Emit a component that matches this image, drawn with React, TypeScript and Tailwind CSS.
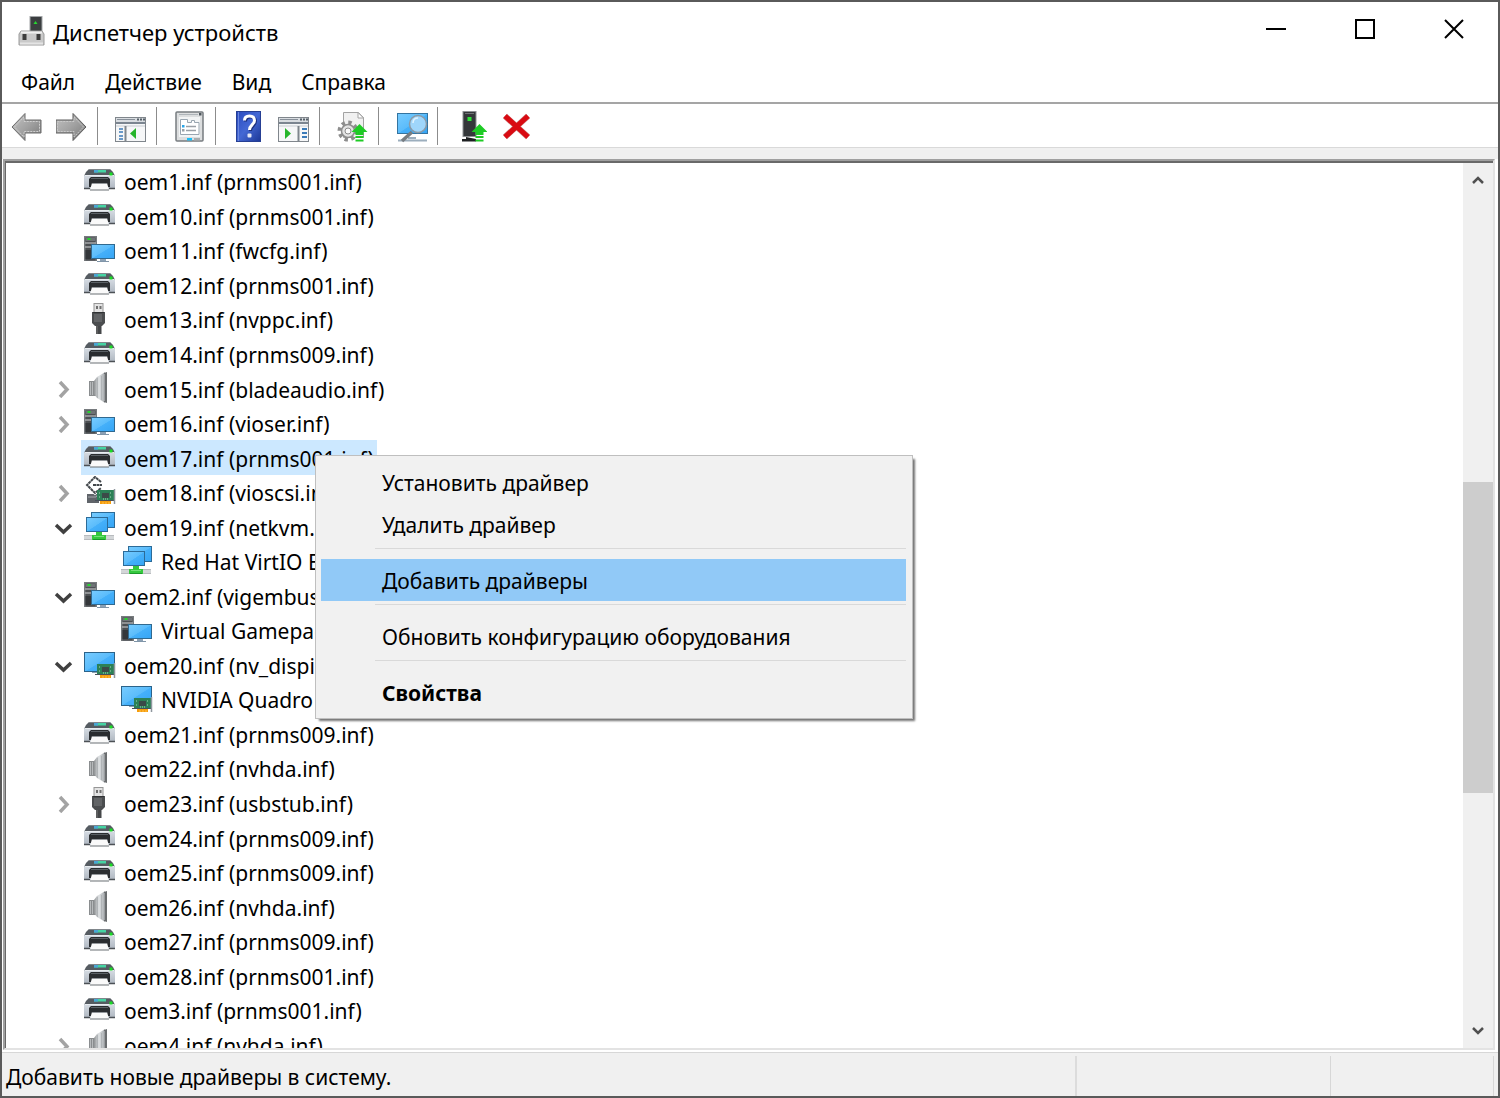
import type { ReactNode } from 'react'

type IconName = 'printer' | 'computer' | 'usb' | 'speaker' | 'storage' | 'network' | 'display'

interface TreeRow {
  label: string
  icon: IconName
  state?: 'open' | 'closed'
  child?: boolean
  selected?: boolean
}

const rows: TreeRow[] = [
  { label: 'oem1.inf (prnms001.inf)', icon: 'printer' },
  { label: 'oem10.inf (prnms001.inf)', icon: 'printer' },
  { label: 'oem11.inf (fwcfg.inf)', icon: 'computer' },
  { label: 'oem12.inf (prnms001.inf)', icon: 'printer' },
  { label: 'oem13.inf (nvppc.inf)', icon: 'usb' },
  { label: 'oem14.inf (prnms009.inf)', icon: 'printer' },
  { label: 'oem15.inf (bladeaudio.inf)', icon: 'speaker', state: 'closed' },
  { label: 'oem16.inf (vioser.inf)', icon: 'computer', state: 'closed' },
  { label: 'oem17.inf (prnms001.inf)', icon: 'printer', selected: true },
  { label: 'oem18.inf (vioscsi.inf)', icon: 'storage', state: 'closed' },
  { label: 'oem19.inf (netkvm.inf)', icon: 'network', state: 'open' },
  { label: 'Red Hat VirtIO E', icon: 'network', child: true },
  { label: 'oem2.inf (vigembus', icon: 'computer', state: 'open' },
  { label: 'Virtual Gamepad', icon: 'computer', child: true },
  { label: 'oem20.inf (nv_dispi', icon: 'display', state: 'open' },
  { label: 'NVIDIA Quadro', icon: 'display', child: true },
  { label: 'oem21.inf (prnms009.inf)', icon: 'printer' },
  { label: 'oem22.inf (nvhda.inf)', icon: 'speaker' },
  { label: 'oem23.inf (usbstub.inf)', icon: 'usb', state: 'closed' },
  { label: 'oem24.inf (prnms009.inf)', icon: 'printer' },
  { label: 'oem25.inf (prnms009.inf)', icon: 'printer' },
  { label: 'oem26.inf (nvhda.inf)', icon: 'speaker' },
  { label: 'oem27.inf (prnms009.inf)', icon: 'printer' },
  { label: 'oem28.inf (prnms001.inf)', icon: 'printer' },
  { label: 'oem3.inf (prnms001.inf)', icon: 'printer' },
  { label: 'oem4.inf (nvhda.inf)', icon: 'speaker', state: 'closed' },
]

const menuBar = ['Файл', 'Действие', 'Вид', 'Справка']

function Svg({ children }: { children: ReactNode }) {
  return (
    <svg viewBox="0 0 32 32" className="h-8 w-8 shrink-0" aria-hidden="true">
      {children}
    </svg>
  )
}

// Gradients shared by all the icons
function IconDefs() {
  return (
    <svg className="absolute h-0 w-0" aria-hidden="true">
      <defs>
        <linearGradient id="screen" x1="0" y1="0" x2="1" y2="1">
          <stop offset="0" stopColor="#78ccff" />
          <stop offset="0.5" stopColor="#5bbcfb" />
          <stop offset="0.52" stopColor="#45b0fa" />
          <stop offset="1" stopColor="#36a5f5" />
        </linearGradient>
        <linearGradient id="arrow" x1="0" y1="0" x2="1" y2="1">
          <stop offset="0" stopColor="#c4c4c4" />
          <stop offset="0.5" stopColor="#a2a2a2" />
          <stop offset="1" stopColor="#777777" />
        </linearGradient>
        <linearGradient id="help" x1="0" y1="0" x2="1" y2="1">
          <stop offset="0" stopColor="#2a4bc0" />
          <stop offset="0.5" stopColor="#4468d4" />
          <stop offset="1" stopColor="#1c3796" />
        </linearGradient>
        <linearGradient id="cone" x1="0" y1="0" x2="1" y2="0">
          <stop offset="0" stopColor="#8f9294" />
          <stop offset="0.45" stopColor="#dfe2e4" />
          <stop offset="1" stopColor="#a4a8ab" />
        </linearGradient>
        <linearGradient id="body" x1="0" y1="0" x2="0" y2="1">
          <stop offset="0" stopColor="#d6dce3" />
          <stop offset="1" stopColor="#aeb6c0" />
        </linearGradient>
      </defs>
    </svg>
  )
}

function Board({ x, y }: { x: number; y: number }) {
  return (
    <g transform={`translate(${x} ${y})`}>
      <rect x="5" y="11" width="11" height="4" fill="#f59d0d" />
      <path d="M8 13v2M11 13v2M14 13v2" stroke="#ffc04d" />
      <rect x="2" y="1" width="17" height="11" fill="#2c8157" />
      <path d="M0 11.5h19" stroke="#47505a" />
      <rect x="7" y="4" width="7" height="5" fill="#3b4a48" />
      <path d="M4 4h2M4 8h2M15 4h2M15 8h2M8 10h5" stroke="#a8d8b8" strokeDasharray="1 1" />
      <path d="M19.500 0v15" stroke="#8f979e" strokeWidth="1.500" />
    </g>
  )
}

function DeviceIcon({ name }: { name: IconName }) {
  switch (name) {
    case 'printer':
      return (
        <Svg>
          <path d="M5 4h21l3 3 2 4H0l2-4z" fill="#565c62" />
          <path d="M5 4.500h21" stroke="#80868b" />
          <rect x="10" y="5" width="12" height="2.500" fill="#45d3a2" />
          <rect x="10" y="5" width="4" height="2.500" fill="#4aa5d6" />
          <rect x="0" y="10" width="31" height="14" rx="1" fill="url(#body)" />
          <path d="M1 10.500h29" stroke="#e8ecf0" />
          <rect x="25.500" y="7.500" width="3" height="3" fill="#18dd24" />
          <path d="M5 14l2-2h17l2 2v8H5z" fill="#2a2d30" />
          <path d="M7 13.500h17" stroke="#5b6166" />
          <path d="M0 23.500h6M25 23.500h6" stroke="#4c5156" strokeWidth="1.500" />
          <path d="M8 18h15l2 7H6z" fill="#fafafa" />
          <path d="M8 18.500h15" stroke="#94989c" />
          <path d="M6 25h19" stroke="#6b7074" />
        </Svg>
      )
    case 'computer':
      return (
        <Svg>
          <rect x="0" y="2" width="13" height="25" fill="#777b7e" />
          <rect x="1.500" y="3.500" width="10" height="23" fill="#4c4f52" />
          <rect x="2" y="4" width="9" height="3" fill="#6e7376" />
          <rect x="3.500" y="4" width="3" height="2" fill="#25d52d" />
          <path d="M1 9h11M1 13h7" stroke="#a5a8aa" strokeWidth="1.300" />
          <rect x="1.500" y="16" width="6" height="9" fill="#34373a" />
          <rect x="7.500" y="10.500" width="23" height="14" fill="url(#screen)" stroke="#31698f" />
          <rect x="16" y="25" width="6" height="2" fill="#8ba0b4" />
          <path d="M13 27.500h12" stroke="#8095a8" />
        </Svg>
      )
    case 'usb':
      return (
        <Svg>
          <rect x="10" y="0.500" width="9" height="9" fill="#e3e3e3" stroke="#969696" />
          <rect x="12" y="3" width="2" height="3" fill="#6f6f6f" />
          <rect x="15.500" y="3" width="2" height="3" fill="#6f6f6f" />
          <path d="M8 9h13v11l-3 3h-7l-3-3z" fill="#4b4d4f" />
          <rect x="10" y="11" width="8" height="8" fill="#626466" />
          <path d="M9 9.500h11" stroke="#303234" />
          <rect x="12" y="23" width="5.500" height="8" fill="#454749" />
          <path d="M13 23v8" stroke="#777" />
        </Svg>
      )
    case 'speaker':
      return (
        <Svg>
          <rect x="5" y="9" width="7" height="15" fill="#8a8d8f" />
          <path d="M6.500 10v13M8.500 10v13" stroke="#b7babc" />
          <path d="M10 9l3-4 5-3 3-2v31l-3-2-5-3-3-4z" fill="url(#cone)" />
          <path d="M13.500 6v20M17.500 4v24" stroke="#b0b4b7" />
          <path d="M20 1l3-1v31l-3-1z" fill="#6b6e70" />
          <path d="M20.500 2v27" stroke="#9a9da0" />
        </Svg>
      )
    case 'storage':
      return (
        <Svg>
          <rect x="3" y="18" width="12" height="9" fill="#60646a" />
          <path d="M4 21h8l3-4" stroke="#a3a8ac" fill="none" />
          <path d="M16 5l-5-4-8 8 8 7 5-4" fill="none" stroke="#fff" strokeWidth="5" />
          <path d="M17 6l-6-5-8 8 8 8 6-5M9 9h9" fill="none" stroke="#43484c" strokeWidth="2" strokeDasharray="3 0.500" />
          <Board x={11} y={13} />
        </Svg>
      )
    case 'network':
      return (
        <Svg>
          <rect x="7.500" y="1.500" width="23" height="15" fill="url(#screen)" stroke="#2c6b98" />
          <rect x="2.500" y="6.500" width="21" height="14" fill="url(#screen)" stroke="#2c6b98" />
          <rect x="0" y="24" width="30" height="5" fill="#d3d6d8" />
          <path d="M0 28.500h30M0 24.500h30" stroke="#b8bbbe" />
          <path d="M12 21h6v3h4v5H8v-5h4z" fill="#35c83e" />
          <path d="M9 28.500h12" stroke="#1b982a" />
          <path d="M10 25.500h10" stroke="#72df76" />
        </Svg>
      )
    case 'display':
      return (
        <Svg>
          <rect x="0.500" y="3.500" width="30" height="19" fill="url(#screen)" stroke="#2b638a" />
          <rect x="8" y="23" width="8" height="1" fill="#8ca0b0" />
          <Board x={11} y={14} />
        </Svg>
      )
  }
}

function GreenArrow() {
  return (
    <g fill="#1ecb25">
      <path d="M22.500 13l8 8h-4v3h-8v-3h-4z" />
      <rect x="18.500" y="25" width="8" height="2" />
      <rect x="18.500" y="28.500" width="8" height="2" />
    </g>
  )
}

function ConsoleWindow({ flipped }: { flipped?: boolean }) {
  return (
    <g transform="translate(0 1)">
      <rect x="0.500" y="5.500" width="30" height="24" fill="#f6f7f8" stroke="#80868c" />
      <rect x="1" y="6" width="29" height="4" fill="#d9dde1" />
      <path d="M2 7.500h18" stroke="#88909a" />
      <path d="M22 7.500h2M25 7.500h2M28 7.500h2" stroke="#566069" strokeWidth="2" />
      <path d="M1 11h29" stroke="#7b8590" strokeWidth="2" />
      <path d="M1 14h29" stroke="#c8cdd2" />
      {flipped ? (
        <>
          <path d="M20.500 14v15" stroke="#7f868d" strokeWidth="2" />
          <path d="M24 17h5M24 21h5M24 25h5" stroke="#3b7bb8" strokeWidth="2" />
          <path d="M7 16v11l6-5.500z" fill="#26b52b" />
        </>
      ) : (
        <>
          <path d="M10.500 14v15" stroke="#7f868d" strokeWidth="2" />
          <path d="M4 17h4M4 20h4M4 24h4M4 27h4" stroke="#3b7bb8" strokeWidth="1.500" />
          <path d="M21 16v11l-6-5.500z" fill="#26b52b" />
        </>
      )}
    </g>
  )
}

const toolGroups: { label: string; icon: ReactNode }[][] = [
  [
    {
      label: 'Назад',
      icon: (
        <>
          <path d="M1 16L14 2.500V9h16v13H14v7.500z" fill="url(#arrow)" stroke="#6d6d6d" />
          <path d="M3.500 16L13 6v4.500h15.500v10H13V26z" fill="none" stroke="#d0d0d0" strokeDasharray="2 1" />
        </>
      ),
    },
    {
      label: 'Вперед',
      icon: (
        <>
          <path d="M30 16L17 2.500V9H0v13h17v7.500z" fill="url(#arrow)" stroke="#5d5d5d" />
          <path d="M27.500 16L18 6v4.500H1.500v10H18V26z" fill="none" stroke="#cacaca" strokeDasharray="2 1" />
        </>
      ),
    },
  ],
  [{ label: 'Показать дерево консоли', icon: <ConsoleWindow /> }],
  [
    {
      label: 'Свойства',
      icon: (
        <>
          <rect x="2" y="1" width="27" height="29" rx="1" fill="#dcdedf" stroke="#777c80" strokeWidth="1.500" />
          <path d="M5 3.500h19" stroke="#aeb4b9" />
          <rect x="25" y="2" width="2.500" height="2.500" fill="#4e565d" />
          <rect x="5" y="6" width="21" height="20" fill="#f2f4f5" />
          <path d="M6.500 23.500v-15h7v3h4v-2h3v2h4.500v12z" fill="#fff" stroke="#9aa6b1" />
          <path d="M12 15.500h10M12 19.500h10" stroke="#9aa0a6" strokeWidth="1.500" />
          <rect x="8" y="14" width="2.500" height="2.500" fill="#29a5e8" />
          <rect x="8" y="18" width="2.500" height="2.500" fill="#9aa0a6" />
          <rect x="13" y="27" width="5" height="2.500" fill="#1cbdf5" />
          <rect x="20" y="27" width="6" height="2.500" fill="#a9adb0" />
        </>
      ),
    },
  ],
  [
    {
      label: 'Справка',
      icon: (
        <>
          <rect x="3.500" y="0.500" width="24" height="30" fill="url(#help)" stroke="#263f94" />
          <path d="M5.500 1v29" stroke="#6b87dd" />
          <path d="M11.500 9.500c0-3 2-4.500 5-4.500s5 1.600 5 4.500c0 4-5 4.500-5 9.500" fill="none" stroke="#1b2f7c" strokeWidth="3" transform="translate(1 1)" />
          <path d="M11.500 9.500c0-3 2-4.500 5-4.500s5 1.600 5 4.500c0 4-5 4.500-5 9.500" fill="none" stroke="#fff" strokeWidth="3" />
          <rect x="14.500" y="22.500" width="4" height="4" rx="1" fill="#e6e9f5" />
        </>
      ),
    },
    { label: 'Показать панель действий', icon: <ConsoleWindow flipped /> },
  ],
  [
    {
      label: 'Обновить драйвер',
      icon: (
        <>
          <path d="M6.500 1.500h15l5 5v20h-20z" fill="#f1f1f1" stroke="#a3a3a3" />
          <path d="M21 1.500v5.500h5.500z" fill="#fff" stroke="#a3a3a3" />
          <circle cx="11" cy="20" r="8.500" fill="none" stroke="#8d8d8d" strokeWidth="4" strokeDasharray="3.340 3.340" />
          <circle cx="11" cy="20" r="6.500" fill="#e3e3e3" stroke="#8d8d8d" strokeWidth="1.500" />
          <circle cx="11" cy="20" r="3" fill="#fafafa" stroke="#8d8d8d" />
          <GreenArrow />
        </>
      ),
    },
  ],
  [
    {
      label: 'Обновить конфигурацию оборудования',
      icon: (
        <>
          <rect x="1.500" y="2.500" width="30" height="20" fill="url(#screen)" stroke="#3474a0" />
          <path d="M2 29.500h29M12 27h8" stroke="#9caebd" strokeWidth="2" />
          <path d="M16 21L6 30" stroke="#777d82" strokeWidth="3.500" />
          <circle cx="22" cy="13" r="8.500" fill="#9fd6fb" stroke="#8b9aa6" strokeWidth="1.500" />
          <path d="M17 12c0-3 2-5 5-5" fill="none" stroke="#e0f3ff" strokeWidth="1.500" />
        </>
      ),
    },
  ],
  [
    {
      label: 'Включить устройство',
      icon: (
        <g transform="translate(2 0)">
          <rect x="6" y="0.500" width="13" height="25" fill="#34373a" stroke="#8e9194" />
          <path d="M8 2.500h9" stroke="#707376" />
          <rect x="10.500" y="6" width="4" height="4" fill="#2de538" />
          <path d="M9 26v2H5v2.500h14V28" fill="#1e2022" />
          <GreenArrow />
        </g>
      ),
    },
    {
      label: 'Удалить устройство',
      icon: (
        <>
          <path d="M5 5l23 21M28 5L5 26" stroke="#c77" strokeWidth="6" />
          <path d="M5 5l23 21M28 5L5 26" stroke="#d90a12" strokeWidth="5" />
        </>
      ),
    },
  ],
]

function Expander({ state }: { state?: 'open' | 'closed' }) {
  if (!state) return <span className="w-5 shrink-0" />
  return (
    <button className="h-5 w-5 shrink-0" aria-label={state === 'open' ? 'Свернуть' : 'Развернуть'}>
      <svg viewBox="0 0 20 20" className="h-5 w-5" fill="none">
        {state === 'open' ? (
          <path d="M2 8l7.500 7L17 8" stroke="#404040" strokeWidth="3.500" />
        ) : (
          <path d="M6 4l7 7.500L6 19" stroke="#a3a3a3" strokeWidth="3.500" />
        )}
      </svg>
    </button>
  )
}

function MenuItem({ children, active, bold }: { children: ReactNode; active?: boolean; bold?: boolean }) {
  return (
    <button
      role="menuitem"
      className={`block h-[42px] w-full pt-0.5 pl-[61px] text-left ${active ? 'bg-[#91c9f7]' : ''} ${bold ? 'font-bold' : ''}`}
    >
      {children}
    </button>
  )
}

function MenuDivider() {
  return (
    <div className="h-3.5 pt-[3px] pl-[54px]" role="separator">
      <div className="h-px bg-[#d9d9d9]" />
    </div>
  )
}

function ContextMenu() {
  return (
    <div
      role="menu"
      className="absolute top-[15px] left-[234px] z-10 w-[598px] border border-[#bfbfbf] bg-[#f1f1f1] py-[5px] pr-1.5 pl-[5px] shadow-[3px_3px_2px_-1px_rgba(0,0,0,0.55)]"
    >
      <MenuItem>Установить драйвер</MenuItem>
      <MenuItem>Удалить драйвер</MenuItem>
      <MenuDivider />
      <MenuItem active>Добавить драйверы</MenuItem>
      <MenuDivider />
      <MenuItem>Обновить конфигурацию оборудования</MenuItem>
      <MenuDivider />
      <MenuItem bold>Свойства</MenuItem>
    </div>
  )
}

function DriverTree() {
  return (
    <ul className="mt-px grid h-[898px] flex-1 auto-rows-fr pl-12">
      {rows.map((row) => (
        <li key={row.label} className={`flex items-center gap-[7px] ${row.child ? 'pl-[37px]' : ''}`}>
          <Expander state={row.state} />
          <div
            className={`relative flex h-full items-center gap-2 px-[3px] whitespace-nowrap ${
              row.selected ? 'bg-[#cce8ff]' : ''
            }`}
          >
            <DeviceIcon name={row.icon} />
            <span className="pt-0.5">{row.label}</span>
            {row.selected && <ContextMenu />}
          </div>
        </li>
      ))}
    </ul>
  )
}

function ScrollBar() {
  return (
    <div className="flex w-[30px] shrink-0 flex-col bg-[#f0f0f0]">
      <button className="flex h-[34px] items-center justify-center" aria-label="Вверх">
        <svg viewBox="0 0 12 10" className="h-2.5 w-3" fill="none">
          <path d="M1 8l5-5 5 5" stroke="#505050" strokeWidth="2.500" />
        </svg>
      </button>
      <div className="flex flex-1 flex-col">
        <div className="grow-[285]" />
        <div className="grow-[311] bg-[#cdcdcd]" />
        <div className="grow-[221]" />
      </div>
      <button className="flex h-[34px] items-center justify-center" aria-label="Вниз">
        <svg viewBox="0 0 12 10" className="h-2.5 w-3" fill="none">
          <path d="M1 2l5 5 5-5" stroke="#505050" strokeWidth="2.500" />
        </svg>
      </button>
    </div>
  )
}

export default function App() {
  return (
    <div className="flex h-screen flex-col overflow-hidden border-2 border-[#5a5a5a] bg-white font-['Noto_Sans',sans-serif] text-[21px] leading-[34px] text-black">
      <IconDefs />

      {/* Title bar */}
      <header className="flex h-[60px] shrink-0 items-center pl-4">
        <svg viewBox="0 0 28 32" className="h-8 w-7" aria-hidden="true">
          <rect x="12" y="0.500" width="12" height="16" fill="#3b3e40" stroke="#a3a6a8" />
          <path d="M17.500 5l2 3h-4z" fill="#26d930" />
          <path d="M3 15h21l2 3v11H1V18z" fill="#c9c9c9" stroke="#9b9b9b" />
          <path d="M3 16.500h21" stroke="#efefef" strokeWidth="2" />
          <rect x="4.500" y="18" width="4" height="6" fill="#3c3c3c" />
          <rect x="18.500" y="18" width="4" height="6" fill="#3c3c3c" />
          <path d="M2 27.500h23" stroke="#e4e4e4" strokeWidth="2" />
        </svg>
        <h1 className="ml-[7px] flex-1 text-[22px]">Диспетчер устройств</h1>
        <div className="flex self-start">
          <button className="flex h-[54px] w-[89px] items-center justify-center" aria-label="Свернуть">
            <span className="h-0.5 w-5 bg-black" />
          </button>
          <button className="flex h-[54px] w-[89px] items-center justify-center" aria-label="Развернуть">
            <span className="h-5 w-5 border-2 border-black" />
          </button>
          <button className="flex h-[54px] w-[89px] items-center justify-center" aria-label="Закрыть">
            <svg viewBox="0 0 20 20" className="h-5 w-5">
              <path d="M1 1l18 18M19 1L1 19" stroke="#000" strokeWidth="2" />
            </svg>
          </button>
        </div>
      </header>

      <nav className="flex h-10 shrink-0 items-center pl-1">
        {menuBar.map((item) => (
          <button key={item} className="px-[15px]">
            {item}
          </button>
        ))}
      </nav>

      {/* Toolbar */}
      <div className="flex h-[46px] shrink-0 items-center border-t-2 border-b border-t-[#a5a5a5] border-b-[#d9d9d9] pl-[9px]" role="toolbar">
        {toolGroups.map((group, i) => (
          <div key={i} className="flex items-center">
            {i > 0 && <span className="mr-[17px] ml-[9px] h-[38px] w-px bg-[#8c8c8c]" />}
            <div className="flex gap-[13px] pt-0.5">
              {group.map((tool) => (
                <button key={tool.label} aria-label={tool.label}>
                  <Svg>{tool.icon}</Svg>
                </button>
              ))}
            </div>
          </div>
        ))}
      </div>
      <div className="h-[11px] shrink-0 bg-[#f0f0f0]" />

      {/* Driver list with its sunken frame */}
      <main className="mr-[3px] ml-px flex min-h-0 flex-1 border-2 border-t-[#a0a0a0] border-r-[#e3e3e3] border-b-[#e3e3e3] border-l-[#a0a0a0]">
        <div className="flex min-w-0 flex-1 overflow-hidden border-t-2 border-l border-[#696969]">
          <DriverTree />
          <ScrollBar />
        </div>
      </main>

      {/* Status bar */}
      <footer className="mt-0.5 flex h-11 shrink-0 border-t border-[#d7d7d7] bg-[#f0f0f0] pt-[3px] pr-1">
        <p className="flex-1 border-r-2 border-[#dcdcdc] pt-1 pl-1">Добавить новые драйверы в систему.</p>
        <div className="w-[254px] border-r border-[#d7d7d7]" />
        <div className="w-[163px] border-r border-[#d7d7d7]" />
      </footer>
    </div>
  )
}
